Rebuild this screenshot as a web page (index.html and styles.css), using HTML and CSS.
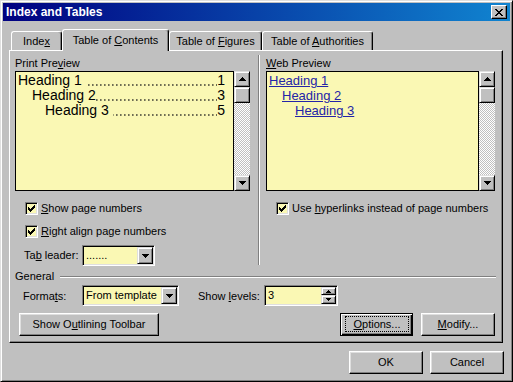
FILE: index.html
```html
<!DOCTYPE html>
<html lang="en">
<head>
    <meta charset="UTF-8">
    <title>Index and Tables</title>
    <link rel="stylesheet" href="styles.css">
</head>
<body>
    <div class="window">
        <div class="titlebar">
            <span class="title">Index and Tables</span>
            <div class="close-btn">
                <svg width="8" height="7" viewBox="0 0 8 7"><path d="M0 0h2v1H0zM6 0h2v1H6zM1 1h2v1H1zM5 1h2v1H5zM2 2h4v1H2zM3 3h2v1H3zM2 4h4v1H2zM1 5h2v1H1zM5 5h2v1H5zM0 6h2v1H0zM6 6h2v1H6z"/></svg>
            </div>
        </div>

        <div class="tabs">
            <div class="tab tab-index">Inde<u>x</u></div>
            <div class="tab tab-active">Table of <u>C</u>ontents</div>
            <div class="tab tab-figures">Table of <u>F</u>igures</div>
            <div class="tab tab-authorities">Table of <u>A</u>uthorities</div>
        </div>

        <div class="panel">
            <div class="previews">
                <div class="col col-print">
                    <div class="label">Print Pre<u>v</u>iew</div>
                    <div class="preview">
                        <div class="preview-area print-area">
                            <div class="toc-line"><span class="spaced">Heading 1</span><span class="leader"></span><span>1</span></div>
                            <div class="toc-line level-2"><span>Heading 2</span><span class="leader"></span><span>3</span></div>
                            <div class="toc-line level-3"><span class="spaced">Heading 3</span><span class="leader"></span><span>5</span></div>
                        </div>
                        <div class="scrollbar">
                            <div class="raised sb-btn"><svg width="7" height="4" viewBox="0 0 7 4"><path d="M3 0h1v1H3zM2 1h3v1H2zM1 2h5v1H1zM0 3h7v1H0z"/></svg></div>
                            <div class="raised sb-thumb"></div>
                            <div class="sb-track"></div>
                            <div class="raised sb-btn"><svg width="7" height="4" viewBox="0 0 7 4"><path d="M0 0h7v1H0zM1 1h5v1H1zM2 2h3v1H2zM3 3h1v1H3z"/></svg></div>
                        </div>
                    </div>
                    <div class="check check-first">
                        <span class="box"><svg width="7" height="7" viewBox="0 0 7 7"><path d="M6 0h1v1H6zM5 1h2v1H5zM0 2h1v1H0zM4 2h3v1H4zM0 3h2v1H0zM3 3h3v1H3zM0 4h5v1H0zM1 5h3v1H1zM2 6h1v1H2z"/></svg></span>
                        <span><u>S</u>how page numbers</span>
                    </div>
                    <div class="check check-second">
                        <span class="box"><svg width="7" height="7" viewBox="0 0 7 7"><path d="M6 0h1v1H6zM5 1h2v1H5zM0 2h1v1H0zM4 2h3v1H4zM0 3h2v1H0zM3 3h3v1H3zM0 4h5v1H0zM1 5h3v1H1zM2 6h1v1H2z"/></svg></span>
                        <span><u>R</u>ight align page numbers</span>
                    </div>
                    <div class="field-row leader-row">
                        <span class="field-label leader-label">Ta<u>b</u> leader:</span>
                        <div class="combo combo-leader">
                            <span class="combo-text">.......</span>
                            <span class="raised drop"><svg width="7" height="4" viewBox="0 0 7 4"><path d="M0 0h7v1H0zM1 1h5v1H1zM2 2h3v1H2zM3 3h1v1H3z"/></svg></span>
                        </div>
                    </div>
                </div>

                <div class="vsep"></div>

                <div class="col col-web">
                    <div class="label"><u>W</u>eb Preview</div>
                    <div class="preview">
                        <div class="preview-area web-area">
                            <div class="web-line"><a>Heading 1</a></div>
                            <div class="web-line level-2"><a>Heading 2</a></div>
                            <div class="web-line level-3"><a>Heading 3</a></div>
                        </div>
                        <div class="scrollbar">
                            <div class="raised sb-btn"><svg width="7" height="4" viewBox="0 0 7 4"><path d="M3 0h1v1H3zM2 1h3v1H2zM1 2h5v1H1zM0 3h7v1H0z"/></svg></div>
                            <div class="raised sb-thumb"></div>
                            <div class="sb-track"></div>
                            <div class="raised sb-btn"><svg width="7" height="4" viewBox="0 0 7 4"><path d="M0 0h7v1H0zM1 1h5v1H1zM2 2h3v1H2zM3 3h1v1H3z"/></svg></div>
                        </div>
                    </div>
                    <div class="check check-first">
                        <span class="box"><svg width="7" height="7" viewBox="0 0 7 7"><path d="M6 0h1v1H6zM5 1h2v1H5zM0 2h1v1H0zM4 2h3v1H4zM0 3h2v1H0zM3 3h3v1H3zM0 4h5v1H0zM1 5h3v1H1zM2 6h1v1H2z"/></svg></span>
                        <span>Use <u>h</u>yperlinks instead of page numbers</span>
                    </div>
                </div>
            </div>

            <div class="group-head">
                <span>General</span>
                <div class="hline"></div>
            </div>

            <div class="field-row formats-row">
                <span class="field-label formats-label">Forma<u>t</u>s:</span>
                <div class="combo combo-formats">
                    <span class="combo-text">From template</span>
                    <span class="raised drop"><svg width="7" height="4" viewBox="0 0 7 4"><path d="M0 0h7v1H0zM1 1h5v1H1zM2 2h3v1H2zM3 3h1v1H3z"/></svg></span>
                </div>
                <span class="field-label levels-label">Show <u>l</u>evels:</span>
                <div class="combo spin">
                    <span class="combo-text">3</span>
                    <span class="spin-btns">
                        <span class="raised spin-up"><svg width="5" height="3" viewBox="0 0 5 3"><path d="M2 0h1v1H2zM1 1h3v1H1zM0 2h5v1H0z"/></svg></span>
                        <span class="raised spin-down"><svg width="5" height="3" viewBox="0 0 5 3"><path d="M0 0h5v1H0zM1 1h3v1H1zM2 2h1v1H2z"/></svg></span>
                    </span>
                </div>
            </div>

            <div class="button-row">
                <button class="btn btn-outline">Show O<u>u</u>tlining Toolbar</button>
                <button class="btn btn-default btn-options"><span class="focus"><u>O</u>ptions...</span></button>
                <button class="btn btn-modify"><u>M</u>odify...</button>
            </div>
        </div>

        <div class="dialog-buttons">
            <button class="btn btn-dialog">OK</button>
            <button class="btn btn-dialog">Cancel</button>
        </div>
    </div>
</body>
</html>
```

FILE: styles.css
```css
* {
    margin: 0;
    padding: 0;
    box-sizing: border-box;
}

body {
    width: 513px;
    height: 382px;
    overflow: hidden;
    background: #c0c0c0;
    font-family: 'Liberation Sans', Arial, sans-serif;
    font-size: 11px;
    line-height: 13px;
    color: #000;
}

u {
    text-decoration: underline;
    text-underline-offset: 1px;
}

.window {
    width: 513px;
    height: 382px;
    background: #c0c0c0;
    border: 1px solid;
    border-color: #dfdfdf #000 #000 #dfdfdf;
    box-shadow: inset 1px 1px #fff, inset -1px -1px #808080;
    padding: 2px;
    display: flex;
    flex-direction: column;
}

/* title bar */
.titlebar {
    height: 18px;
    flex-shrink: 0;
    display: flex;
    justify-content: space-between;
    align-items: flex-start;
    padding-left: 3px;
    background: linear-gradient(90deg, #000080, #1084d0);
    color: #fff;
}

.title {
    font-size: 12px;
    font-weight: bold;
    line-height: 18px;
}

.raised {
    background: #c0c0c0;
    border: 1px solid;
    border-color: #dfdfdf #000 #000 #dfdfdf;
    box-shadow: inset 1px 1px #fff, inset -1px -1px #808080;
    display: flex;
    align-items: center;
    justify-content: center;
}

.close-btn {
    width: 16px;
    height: 14px;
    margin: 2px 3px 0 0;
    background: #c0c0c0;
    border: 1px solid;
    border-color: #fff #000 #000 #fff;
    box-shadow: inset -1px -1px #808080;
    display: flex;
    align-items: center;
    justify-content: center;
}

/* tabs */
.tabs {
    height: 21px;
    margin-top: 8px;
    padding-left: 8px;
    display: flex;
    align-items: flex-end;
    flex-shrink: 0;
}

.tab {
    height: 19px;
    padding-top: 3px;
    text-align: center;
    border: 1px solid;
    border-color: #fff #000 transparent #fff;
    border-bottom: 0;
    border-radius: 3px 3px 0 0;
    box-shadow: inset -1px 0 #808080;
    white-space: nowrap;
}

.tab-index {
    width: 51px;
}

.tab-active {
    width: 107px;
    height: 22px;
    padding-top: 4px;
    margin-bottom: -1px;
    position: relative;
    z-index: 1;
    background: #c0c0c0;
}

.tab-figures {
    width: 93px;
}

.tab-authorities {
    width: 111px;
}

/* panel */
.panel {
    width: 494px;
    height: 293px;
    margin-left: 6px;
    flex-shrink: 0;
    border: 1px solid;
    border-color: #fff #000 #000 #fff;
    box-shadow: inset -1px -1px #808080;
    padding: 6px 7px 6px 5px;
    display: flex;
    flex-direction: column;
}

.previews {
    display: flex;
}

.col-print {
    width: 235px;
}

.col-web {
    width: 229px;
}

.vsep {
    width: 2px;
    margin: -2px 6px 1px 8px;
    border-left: 1px solid #808080;
    border-right: 1px solid #fff;
}

.label {
    height: 13px;
    margin-bottom: 1px;
}

.preview {
    height: 120px;
    display: flex;
}

.preview-area {
    flex: 1;
    min-width: 0;
    border: 1px solid #000;
    background: #faf8b4;
    line-height: 15px;
    overflow: hidden;
}

.print-area {
    padding: 1px 8px 0 2px;
    font-size: 14px;
}

.toc-line {
    display: flex;
    white-space: nowrap;
}

.spaced {
    padding-right: 4px;
}

/* dotted tab leader drawn as a row of dots on the baseline */
.leader {
    flex: 1;
    min-width: 0;
    background-image: linear-gradient(90deg, #1a1a1a 0 1.5px, transparent 1.5px);
    background-size: 4px 1.5px;
    background-repeat: repeat-x;
    background-position: right 1px bottom 3px;
}

.toc-line.level-2 {
    padding-left: 14px;
}

.toc-line.level-3 {
    padding-left: 27px;
}

.web-area {
    padding: 1px 0 0 2px;
    font-size: 13px;
}

.web-line a {
    color: #2424a8;
    text-decoration: underline;
}

.web-line.level-2 {
    padding-left: 13px;
}

.web-line.level-3 {
    padding-left: 26px;
}

.scrollbar {
    width: 16px;
    display: flex;
    flex-direction: column;
}

.sb-btn,
.sb-thumb {
    height: 16px;
}

.sb-track {
    flex: 1;
    background: repeating-conic-gradient(#fff 0 25%, #c0c0c0 0 50%) 0 0 / 2px 2px;
}

/* checkboxes */
.check {
    display: flex;
    align-items: flex-start;
    gap: 3px;
    margin-left: 10px;
    white-space: nowrap;
}

.check-first {
    margin-top: 11px;
}

.check-second {
    margin-top: 10px;
}

.box {
    width: 13px;
    height: 13px;
    background: #faf8b4;
    border: 1px solid;
    border-color: #808080 #fff #fff #808080;
    box-shadow: inset 1px 1px #000, inset -1px -1px #dfdfdf;
    display: flex;
    align-items: center;
    justify-content: center;
}

/* fields */
.field-row {
    display: flex;
    align-items: flex-start;
}

.field-label {
    padding-top: 4px;
    white-space: nowrap;
}

.leader-row {
    margin-top: 7px;
}

.leader-label {
    width: 58px;
    margin-left: 9px;
}

.combo {
    height: 21px;
    padding: 1px;
    display: flex;
    background: #faf8b4;
    border: 1px solid;
    border-color: #808080 #fff #fff #808080;
    box-shadow: inset 1px 1px #000, inset -1px -1px #dfdfdf;
}

.combo-text {
    flex: 1;
    padding: 2px 0 0 2px;
    white-space: nowrap;
}

.drop {
    width: 16px;
    height: 17px;
}

.combo-leader {
    width: 73px;
}

.group-head {
    margin-top: 4px;
    height: 13px;
    display: flex;
    align-items: center;
}

.hline {
    flex: 1;
    height: 2px;
    margin: 1px -1px 0 6px;
    border-top: 1px solid #808080;
    border-bottom: 1px solid #fff;
}

.formats-row {
    margin-top: 2px;
}

.formats-label {
    width: 59px;
    margin-left: 8px;
    padding-top: 5px;
}

.combo-formats {
    width: 97px;
}

.levels-label {
    width: 66px;
    margin-left: 19px;
    padding-top: 5px;
}

.spin {
    width: 74px;
}

.spin-btns {
    width: 15px;
    display: flex;
    flex-direction: column;
}

.spin-up {
    height: 8px;
}

.spin-down {
    height: 9px;
}

/* buttons */
.btn {
    height: 23px;
    font: inherit;
    color: #000;
    background: #c0c0c0;
    border: 1px solid;
    border-color: #fff #000 #000 #fff;
    box-shadow: inset -1px -1px #808080, inset 1px 1px #dfdfdf;
    display: flex;
    align-items: center;
    justify-content: center;
    white-space: nowrap;
}

.button-row {
    margin-top: 7px;
    display: flex;
}

.btn-outline {
    width: 140px;
    margin-left: 4px;
}

.btn-options {
    width: 73px;
    margin-left: auto;
}

.btn-default {
    border-color: #000;
    box-shadow: inset 1px 1px #fff, inset -1px -1px #000, inset -2px -2px #808080;
    align-items: stretch;
}

.focus {
    flex: 1;
    margin: 2px 3px 3px 4px;
    border: 1px dotted #000;
    display: flex;
    align-items: center;
    justify-content: center;
}

.btn-modify {
    width: 74px;
    margin-left: 8px;
}

.dialog-buttons {
    margin-top: 8px;
    padding-right: 6px;
    display: flex;
    justify-content: flex-end;
    gap: 7px;
}

.btn-dialog {
    width: 74px;
}
```
